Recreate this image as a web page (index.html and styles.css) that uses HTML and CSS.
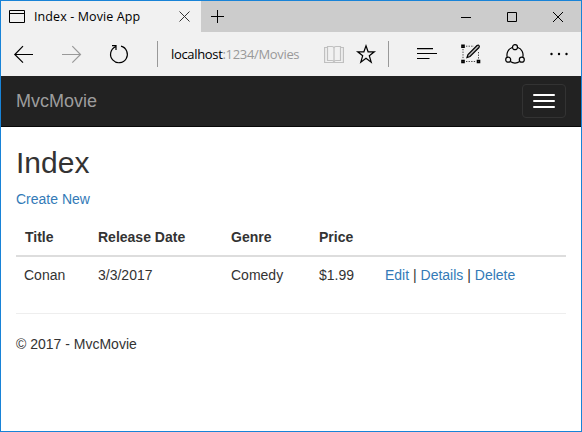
FILE: index.html
```html
<!DOCTYPE html>
<html lang="en">
<head>
<meta charset="utf-8">
<title>Index - Movie App</title>
<link rel="stylesheet" href="styles.css">
</head>
<body>
<div class="window">
  <header class="titlebar">
    <div class="tab">
      <svg class="tab-icon" width="16" height="13" viewBox="0 0 16 13"><path d="M.5.5h15v12H.5zM.5 3.5h15"/></svg>
      <span class="tab-title">Index - Movie App</span>
      <svg class="tab-close" width="11" height="11" viewBox="0 0 11 11"><path d="M.5.5l10 10M10.500.5l-10 10"/></svg>
    </div>
    <svg class="new-tab" width="13" height="13" viewBox="0 0 13 13"><path d="M0 6.500h13M6.500 0v13"/></svg>
    <div class="controls">
      <svg width="10" height="10" viewBox="0 0 10 10"><path d="M0 5.500h10"/></svg>
      <svg width="10" height="10" viewBox="0 0 10 10"><path d="M.5.5h9v9h-9z"/></svg>
      <svg width="10" height="10" viewBox="0 0 10 10"><path d="M0 0l10 10M10 0L0 10"/></svg>
    </div>
  </header>
  <div class="toolbar">
    <svg class="back" width="20" height="18" viewBox="0 0 20 18"><path d="M19 9.500H.8M9 1.200L.8 9.500l8.200 8.200"/></svg>
    <svg class="forward" width="20" height="18" viewBox="0 0 20 18"><path d="M0 9.500h18.500M10.300 1.200l8.200 8.300-8.200 8.200"/></svg>
    <svg class="reload" width="20" height="20" viewBox="0 0 20 20"><path d="M12 2.200A8.400 8.400 0 1 1 6.500 2.700M3 1.700h4v4.300"/></svg>
    <span class="divider"></span>
    <span class="address">localhost<span class="path">:1234/Movies</span></span>
    <svg class="book" width="20" height="19" viewBox="0 0 20 19"><path d="M3 2.500H.6v15h18.800v-15H17M3.500 1.500H8q2 0 2 2 0-2 2-2h4.500v14H12q-2 0-2 2 0-2-2-2H3.500zM10 3.500v14"/></svg>
    <svg class="star" width="20" height="20" viewBox="0 0 20 20"><path d="M10 1.800l2.100 6h6.200l-5 3.900 1.900 6.500-5.200-3.900-5.200 3.900 1.900-6.500-5-3.900h6.200z"/></svg>
    <span class="divider"></span>
    <svg class="hub" width="20" height="12" viewBox="0 0 20 12"><path d="M0 .6h16M0 5.500h20M0 10.500h12.500"/></svg>
    <svg class="note" width="20" height="20" viewBox="0 0 20 20">
      <path class="dots-line" d="M5 2.200h8M2 5v10M5 17.500h10M17.500 8v7"/>
      <path class="handles" d="M1 1.200h2v2H1zM1 16.500h2v2H1zM16.500 16.500h2v2h-2z"/>
      <path class="pen" d="M6 13.500l1-3L16 1.500q1.300-.9 2 0t0 2L9 12.500z"/>
    </svg>
    <svg class="share" width="20" height="20" viewBox="0 0 20 20"><path d="M7.200 3.500A8 8 0 0 0 2.200 13M12.800 3.500A8 8 0 0 1 17.800 13M5.300 17.600q4.700 3 9.400 0"/><circle cx="10" cy="3.200" r="2.500"/><circle cx="3.200" cy="15.700" r="2.500"/><circle cx="16.800" cy="15.700" r="2.500"/></svg>
    <svg class="more" width="18" height="4" viewBox="0 0 18 4"><circle cx="1.500" cy="2" r="1.200"/><circle cx="9" cy="2" r="1.200"/><circle cx="16.500" cy="2" r="1.200"/></svg>
  </div>
  <nav class="navbar">
    <a class="brand">MvcMovie</a>
    <button class="toggle" aria-label="Menu"><span></span><span></span><span></span></button>
  </nav>
  <main class="content">
    <h2>Index</h2>
    <p><a>Create New</a></p>
    <table>
      <colgroup><col class="c-title"><col class="c-date"><col class="c-genre"><col class="c-price"><col></colgroup>
      <thead><tr><th>Title</th><th>Release Date</th><th>Genre</th><th>Price</th><th></th></tr></thead>
      <tbody><tr><td>Conan</td><td>3/3/2017</td><td>Comedy</td><td>$1.99</td><td><a>Edit</a> | <a>Details</a> | <a>Delete</a></td></tr></tbody>
    </table>
    <hr>
    <footer>© 2017 - MvcMovie</footer>
  </main>
</div>
</body>
</html>
```
FILE: styles.css
```css
* { box-sizing: border-box; }
body {
  margin: 0;
  font: 14px/20px "Liberation Sans", Arial, sans-serif;
  color: #333;
}
svg { display: block; flex: none; fill: none; stroke: #000; overflow: visible; }
.window {
  width: 582px;
  height: 432px;
  border: 1px solid #1883d7;
  background: #fff;
}
.titlebar {
  display: flex;
  align-items: center;
  height: 31px;
  background: #ccc;
  font-family: "Open Sans", "Noto Sans", sans-serif;
}
.tab {
  display: flex;
  align-items: center;
  width: 200px;
  height: 31px;
  padding: 0 11px 0 8px;
  background: #f1f1f1;
}
.tab-title { margin-left: 9px; font-size: 12.5px; letter-spacing: 0.1px; color: #000; white-space: nowrap; }
.tab-close { margin-left: auto; stroke: #333; }
.new-tab { margin-left: 10px; }
.controls { display: flex; gap: 36px; margin-left: auto; padding-right: 18px; }
.toolbar {
  display: flex;
  align-items: center;
  height: 44px;
  background: #f1f1f1;
}
.toolbar svg { stroke-width: 1.2; }
.back { margin-left: 13px; }
.forward { margin-left: 28px; }
.toolbar .forward { stroke: #999; }
.reload { margin-left: 27px; }
.divider { width: 1px; height: 26px; background: #999; }
.reload + .divider { margin-left: 28px; }
.address {
  width: 153px;
  margin-left: 13px;
  font: 13px/20px "Open Sans", "Noto Sans", sans-serif;
  letter-spacing: -0.33px;
  color: #000;
  white-space: nowrap;
}
.path { color: #999; }
.toolbar .book { stroke: #c0c0c0; }
.star { margin-left: 12px; }
.star + .divider { margin-left: 12px; }
.hub { margin-left: 28px; }
.note { margin-left: 24px; }
.dots-line { stroke: #444; stroke-width: 1; stroke-dasharray: 1.3 1.3; }
.handles { stroke-width: 1.6; }
.pen { fill: #bbb; }
.share { margin-left: 24px; }
.more { margin-left: 25px; }
.toolbar .more { fill: #000; stroke: none; }
.navbar {
  display: flex;
  align-items: center;
  justify-content: space-between;
  height: 51px;
  padding: 0 15px;
  background: #222;
  border-bottom: 1px solid #080808;
}
.toggle {
  display: flex;
  flex-direction: column;
  gap: 4px;
  width: 44px;
  height: 34px;
  padding: 9px 10px;
  background: transparent;
  border: 1px solid #333;
  border-radius: 4px;
}
.toggle span { width: 22px; height: 2px; border-radius: 1px; background: #fff; }
.content { padding: 0 15px; }
h2 { margin: 19px 0 10px; font-size: 30px; line-height: 33px; font-weight: 500; }
p { margin: 0 0 10px; }
a { color: #337ab7; }
.brand { font-size: 18px; color: #9d9d9d; }
table { width: 100%; margin-bottom: 20px; border-spacing: 0; table-layout: fixed; }
th, td { padding: 8px; text-align: left; white-space: nowrap; }
th { border-bottom: 2px solid #ddd; }
th:first-child { padding-left: 9px; }
.c-title { width: 74px; }
.c-date { width: 133px; }
.c-genre { width: 88px; }
.c-price { width: 66px; }
hr { margin: 0 0 20px; border: 0; border-top: 1px solid #eee; }
```
